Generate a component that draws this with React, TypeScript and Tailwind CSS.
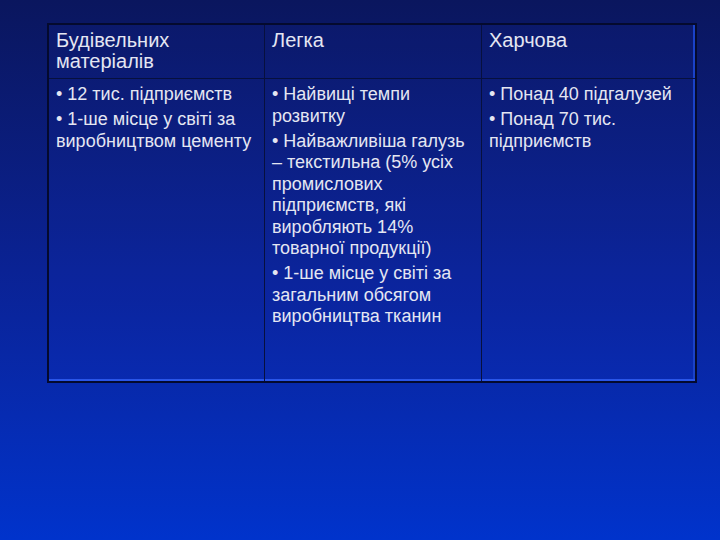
const font = { fontFamily: '"Liberation Sans", Arial, sans-serif' };

const rows = {
  head: ["Будівельних матеріалів", "Легка", "Харчова"],
  body: [
    ["12 тис. підприємств", "1-ше місце у світі за виробництвом цементу"],
    [
      "Найвищі темпи розвитку",
      "Найважливіша галузь – текстильна (5% усіх промислових підприємств, які виробляють 14% товарної продукції)",
      "1-ше місце у світі за загальним обсягом виробництва тканин",
    ],
    ["Понад 40 підгалузей", "Понад 70 тис. підприємств"],
  ],
};

export default function App() {
  return (
    <div
      className="w-[720px] h-[540px] bg-gradient-to-b from-[#0a165e] via-[#0a2294] to-[#0033cc] pt-[23px] pl-[47px] text-[#e4e6f2]"
      style={font}
    >
      <div className="w-[650px] h-[360px] border-2 border-[#040a2e] bg-[#2040ff]/[0.06] shadow-[inset_0_-2px_0_#2a56e8,inset_-2px_0_0_#1a42c8] flex flex-col">
        <div className="grid grid-cols-[216px_217px_1fr] h-[54px] border-b border-[#07103e]">
          {rows.head.map((h, i) => (
            <div
              key={i}
              className={`pt-[5px] pl-[7px] pr-2 text-[20px] leading-[21px] ${i < 2 ? "border-r border-[#07103e]" : ""}`}
            >
              {h}
            </div>
          ))}
        </div>
        <div className="grid grid-cols-[216px_217px_1fr] flex-1">
          {rows.body.map((col, i) => (
            <div
              key={i}
              className={`pt-[5px] pl-[7px] pr-1 text-[18px] leading-[21.5px] flex flex-col gap-[3.5px] ${i < 2 ? "border-r border-[#07103e]" : ""}`}
            >
              {col.map((t, j) => (
                <p key={j}>• {t}</p>
              ))}
            </div>
          ))}
        </div>
      </div>
    </div>
  );
}
